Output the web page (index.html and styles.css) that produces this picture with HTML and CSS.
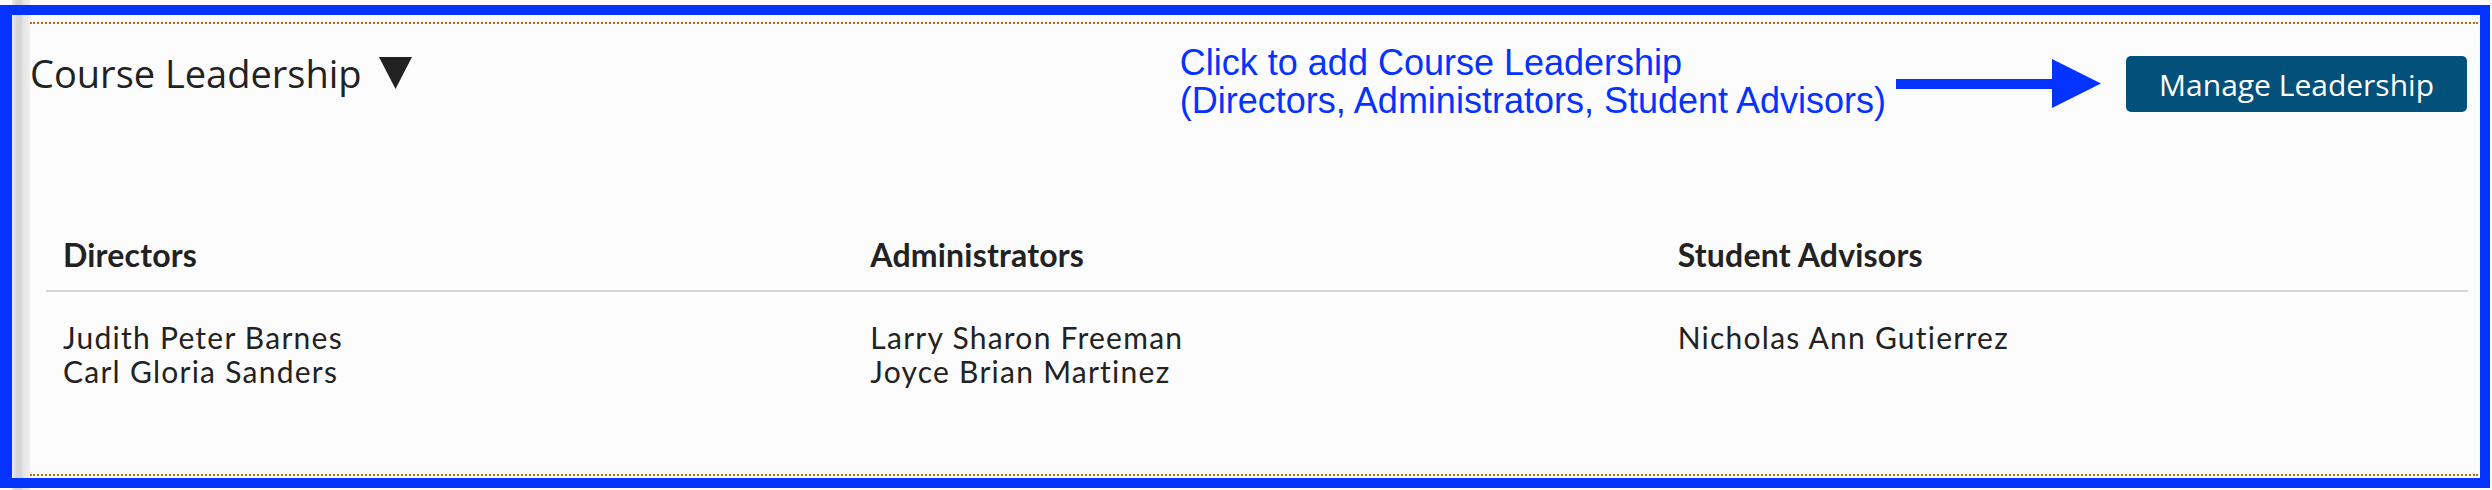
FILE: index.html
```html
<!DOCTYPE html>
<html lang="en">
<head>
<meta charset="utf-8">
<title>Course Leadership</title>
<link rel="stylesheet" href="styles.css">
</head>
<body>
<div class="frame">
  <section class="card">
    <header class="card-head">
      <h2 class="title">Course Leadership
        <svg class="caret" width="33" height="32" viewBox="0 0 33 32" aria-hidden="true"><polygon points="0,0 33,0 16.5,32" fill="#222"/></svg>
      </h2>
      <div class="annotation">
        <p class="note">Click to add Course Leadership<br>(Directors, Administrators, Student Advisors)</p>
        <svg class="arrow" width="205" height="49" viewBox="0 0 205 49" aria-hidden="true"><rect x="0" y="20" width="157" height="10" fill="#0433ff"/><polygon points="156,0 205,24.5 156,49" fill="#0433ff"/></svg>
      </div>
      <button class="btn" type="button">Manage Leadership</button>
    </header>
    <div class="table">
      <div class="th">Directors</div>
      <div class="th">Administrators</div>
      <div class="th">Student Advisors</div>
      <div class="td"><div>Judith Peter Barnes</div><div>Carl Gloria Sanders</div></div>
      <div class="td"><div>Larry Sharon Freeman</div><div>Joyce Brian Martinez</div></div>
      <div class="td"><div>Nicholas Ann Gutierrez</div></div>
    </div>
  </section>
</div>
</body>
</html>
```
FILE: styles.css
```css
html, body {
  height: 490px;
}
body {
  margin: 0;
  background: #fcfcfc linear-gradient(to right, #ebebeb 0, #d4d4d4 5px, #d6d6d6 9px, #e6e6e6 12px, #eeeeee 18px) 12px 0 / 18px 100% no-repeat;
  font-family: "Open Sans", Lato, sans-serif;
  color: #222;
}
.frame {
  margin-top: 5px;
  width: 2490px;
  height: 483px;
  box-sizing: border-box;
  border: 10px solid #0433ff;
  border-left-width: 12px;
  display: flex;
}
.card {
  flex: 1;
  margin: 7px 2px 2px 18px;
  border-top: 2px dotted #cc6600;
  border-bottom: 2px dotted #cc6600;
  background: #fcfcfc;
  display: flex;
  flex-direction: column;
}
.card-head {
  display: flex;
  align-items: flex-start;
}
.title {
  margin: 27px 0 0 0;
  font-size: 38px;
  font-weight: 400;
  line-height: 44px;
  display: flex;
  align-items: center;
  gap: 17px;
}
.annotation {
  margin: 20px 0 0 auto;
  display: flex;
  align-items: flex-start;
}
.note {
  margin: 0;
  font-family: "Liberation Sans", Arial, sans-serif;
  font-size: 36px;
  line-height: 38px;
  color: #0433ff;
}
.arrow {
  margin: 15px 0 0 10px;
}
.btn {
  margin: 32px 11px 0 25px;
  height: 56px;
  padding: 0 33px;
  background: #03517a;
  color: #fff;
  border: 0;
  border-radius: 5px;
  font-family: "Open Sans", sans-serif;
  font-size: 30px;
}
.table {
  display: grid;
  grid-template-columns: repeat(3, 1fr);
  margin: 115px 10px 0 16px;
}
.th {
  font-family: Lato, "Open Sans", sans-serif;
  font-weight: 700;
  font-size: 32px;
  line-height: 40px;
  letter-spacing: 0.2px;
  padding: 0 0 15px 17px;
  border-bottom: 2px solid #d6d6d6;
}
.td {
  font-family: Lato, "Open Sans", sans-serif;
  font-size: 30px;
  line-height: 34px;
  letter-spacing: 1.25px;
  padding: 28px 0 0 17px;
}
```
